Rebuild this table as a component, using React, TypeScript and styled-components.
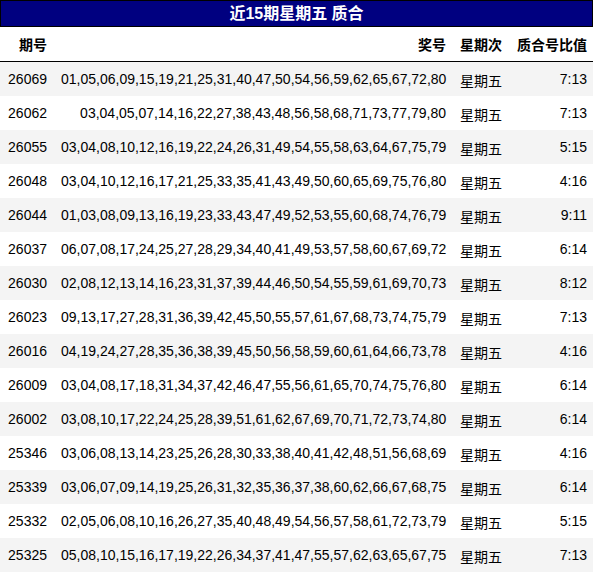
import React from 'react';
import styled, { createGlobalStyle } from 'styled-components';

const GlobalStyle = createGlobalStyle`
  html, body {
    margin: 0;
    padding: 0;
    background: #ffffff;
  }
  body {
    font-family: "Liberation Sans", Arial, "Noto Sans CJK SC", sans-serif;
    color: #000000;
  }
`;

const Wrapper = styled.div`
  width: 593px;
  display: flex;
  flex-direction: column;
`;

const Title = styled.div`
  height: 25px;
  background-color: #000080;
  border: 1px solid #000000;
  color: #ffffff;
  font-weight: bold;
  font-size: 16px;
  line-height: 25px;
  text-align: center;
`;

const Row = styled.div<{ $shade?: boolean; $head?: boolean }>`
  display: grid;
  grid-template-columns: 39px 385px 43px 70px;
  column-gap: 14px;
  padding: 0 7px 0 8px;
  align-items: center;
  height: ${(p) => (p.$head ? '35px' : '34px')};
  box-sizing: border-box;
  background-color: ${(p) => (p.$shade ? '#f4f4f4' : '#ffffff')};
  border-bottom: ${(p) => (p.$head ? '1px solid #000000' : 'none')};
  font-size: 14px;
  font-weight: ${(p) => (p.$head ? 'bold' : 'normal')};
  white-space: nowrap;
  & > :nth-child(4) {
    margin-left: -1px;
  }
`;

const Cell = styled.div<{ $align?: 'left' | 'right' }>`
  text-align: ${(p) => p.$align || 'right'};
`;

const Day = styled(Cell)`
  padding-top: 2px;
`;

const draws: [string, string, string][] = [
  ['26069', '01,05,06,09,15,19,21,25,31,40,47,50,54,56,59,62,65,67,72,80', '7:13'],
  ['26062', '03,04,05,07,14,16,22,27,38,43,48,56,58,68,71,73,77,79,80', '7:13'],
  ['26055', '03,04,08,10,12,16,19,22,24,26,31,49,54,55,58,63,64,67,75,79', '5:15'],
  ['26048', '03,04,10,12,16,17,21,25,33,35,41,43,49,50,60,65,69,75,76,80', '4:16'],
  ['26044', '01,03,08,09,13,16,19,23,33,43,47,49,52,53,55,60,68,74,76,79', '9:11'],
  ['26037', '06,07,08,17,24,25,27,28,29,34,40,41,49,53,57,58,60,67,69,72', '6:14'],
  ['26030', '02,08,12,13,14,16,23,31,37,39,44,46,50,54,55,59,61,69,70,73', '8:12'],
  ['26023', '09,13,17,27,28,31,36,39,42,45,50,55,57,61,67,68,73,74,75,79', '7:13'],
  ['26016', '04,19,24,27,28,35,36,38,39,45,50,56,58,59,60,61,64,66,73,78', '4:16'],
  ['26009', '03,04,08,17,18,31,34,37,42,46,47,55,56,61,65,70,74,75,76,80', '6:14'],
  ['26002', '03,08,10,17,22,24,25,28,39,51,61,62,67,69,70,71,72,73,74,80', '6:14'],
  ['25346', '03,06,08,13,14,23,25,26,28,30,33,38,40,41,42,48,51,56,68,69', '4:16'],
  ['25339', '03,06,07,09,14,19,25,26,31,32,35,36,37,38,60,62,66,67,68,75', '6:14'],
  ['25332', '02,05,06,08,10,16,26,27,35,40,48,49,54,56,57,58,61,72,73,79', '5:15'],
  ['25325', '05,08,10,15,16,17,19,22,26,34,37,41,47,55,57,62,63,65,67,75', '7:13'],
];

export default function App() {
  return (
    <Wrapper>
      <GlobalStyle />
      <Title>近15期星期五 质合</Title>
      <Row $head>
        <Cell>期号</Cell>
        <Cell>奖号</Cell>
        <Cell $align="left">星期次</Cell>
        <Cell>质合号比值</Cell>
      </Row>
      {draws.map(([issue, nums, ratio], i) => (
        <Row key={issue} $shade={i % 2 === 0}>
          <Cell>{issue}</Cell>
          <Cell>{nums}</Cell>
          <Day $align="left">星期五</Day>
          <Cell>{ratio}</Cell>
        </Row>
      ))}
    </Wrapper>
  );
}
